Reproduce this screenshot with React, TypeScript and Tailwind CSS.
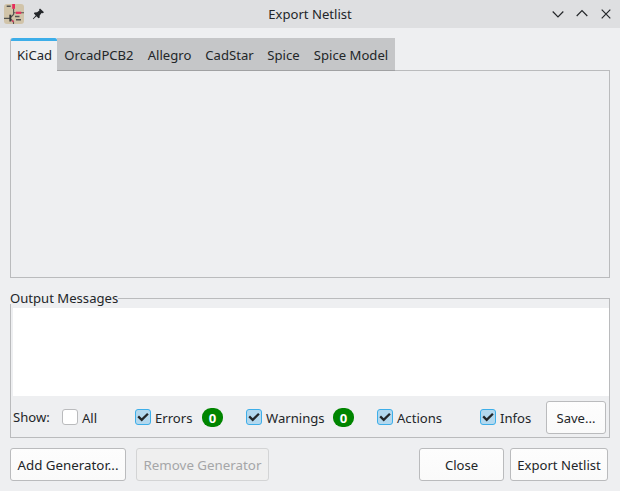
import React from "react";

function Check({ label, checked = false, className }: { label: string; checked?: boolean; className: string }) {
  return (
    <label className={`mb-px flex h-4 shrink-0 items-center gap-1 whitespace-nowrap ${className}`}>
      <span
        className={`flex size-4 shrink-0 items-center justify-center rounded-[3px] border ${
          checked ? "border-[#3daee9] bg-[#b3d8ee]" : "border-[#babbbd] bg-white"
        }`}
      >
        {checked && (
          <svg width="14" height="14" viewBox="0 0 14 14" fill="none" stroke="#232629" strokeWidth="2.3">
            <path d="M2.2 6.4 L5.7 9.8 L11.9 3.7" />
          </svg>
        )}
      </span>
      <span className="pt-[2px]">{label}</span>
    </label>
  );
}

function Badge({ className }: { className: string }) {
  return (
    <span
      className={`flex h-[19px] w-[21px] shrink-0 items-center justify-center rounded-[9px] bg-[#008500] font-bold text-white ${className}`}
    >
      0
    </span>
  );
}

function Button({ label, disabled = false, className }: { label: string; disabled?: boolean; className: string }) {
  return (
    <button
      disabled={disabled}
      className={`flex h-[33px] shrink-0 items-center justify-center whitespace-nowrap rounded-[3px] border pt-px ${
        disabled
          ? "border-[#d3d4d5] bg-[#efefef] text-[#a5a6a8]"
          : "border-[#babbbd] bg-linear-to-b from-[#fdfdfd] to-[#fafafa]"
      } ${className}`}
    >
      {label}
    </button>
  );
}

function TitleBar() {
  return (
    <header className="flex h-7 bg-[#dedfe1]">
      <div className="flex w-[200px] pl-1 pt-1">
        <svg width="20" height="20" viewBox="0 0 20 20">
          <rect width="20" height="20" rx="3" fill="#d1c4a9" />
          <path d="M2.7 2.3h4M11 12.6h4.5M12 15.7h5" stroke="#545350" strokeWidth="1.5" />
          <path d="M9.6 4.5v6L6.5 13.5M0 14.4h6M6.5 15l3 2.5V20M9.6 8.8h2M17 8.8h3" stroke="#545350" strokeWidth="1.1" fill="none" />
          <path d="M6.3 10.7v6.8" stroke="#343536" strokeWidth="1.9" />
          <path d="M9.6 0v4.8" stroke="#e72c5d" strokeWidth="2.8" />
          <path d="M11.8 8.8h5.4" stroke="#e72c5d" strokeWidth="2.2" />
          <path d="M8 16.3l1.6 1.5" stroke="#d84868" strokeWidth="1.6" />
        </svg>
        <svg className="ml-2 mt-1" width="13" height="12" viewBox="0 0 13 12">
          <path d="M8 0.4L12 4.3L10.7 5.2L9.6 5L7.7 7.4L7.6 9.7L6.5 10.2L4.5 8.3L1.3 11.3L0.8 10.8L3.7 7.4L1.9 5.5L2.5 4.4L5.1 4.3L7.4 2.4L7.1 1.4Z" fill="#232629" />
        </svg>
      </div>
      <h1 className="flex flex-1 items-center justify-center">Export Netlist</h1>
      <div className="flex w-[200px] items-center justify-end gap-3 pr-2">
        <svg width="12" height="12" viewBox="0 0 12 12" fill="none" stroke="#232629" strokeWidth="1.2">
          <path d="M0.7 3.5 L6 8.8 L11.3 3.5" />
        </svg>
        <svg width="12" height="12" viewBox="0 0 12 12" fill="none" stroke="#232629" strokeWidth="1.2">
          <path d="M0.7 8 L6 2.7 L11.3 8" />
        </svg>
        <svg width="12" height="12" viewBox="0 0 12 12" fill="none" stroke="#232629" strokeWidth="1.2">
          <path d="M1.7 1.7 L10.3 10.3 M10.3 1.7 L1.7 10.3" />
        </svg>
      </div>
    </header>
  );
}

const tabs = [
  { label: "OrcadPCB2", width: "w-[83px]" },
  { label: "Allegro", width: "w-[58px]" },
  { label: "CadStar", width: "w-[62px]" },
  { label: "Spice", width: "w-[46px]" },
  { label: "Spice Model", width: "w-[89px]" },
];

export default function App() {
  return (
    <div className="flex h-[491px] w-[620px] flex-col overflow-hidden bg-[#eeeff1] font-['Noto_Sans',sans-serif] text-[13.1px] leading-[18px] text-[#232629]">
      <TitleBar />
      <main className="flex flex-col px-[10px] pt-[10px]">
        <nav className="z-10 -mb-px flex h-[33px]">
          <div className="flex w-[47px] flex-col rounded-tl-[3px] border-l border-[#babbbd] bg-[#eeeff1]">
            <div className="h-[3px] rounded-t-[2px] bg-[#3daee9]" />
            <span className="pl-[6px] pt-[5px]">KiCad</span>
          </div>
          {tabs.map((t) => (
            <div
              key={t.label}
              className={`flex items-center justify-center whitespace-nowrap border-b border-[#a0a1a3] bg-[#c5c6c8] pl-px pt-[2px] ${t.width}`}
            >
              {t.label}
            </div>
          ))}
        </nav>
        <section className="h-[208px] border border-[#babbbd]" />

        <section className="mt-[11px] flex h-[149px] flex-col">
          <div className="flex h-[15px]">
            <h2 className="w-[108px] shrink-0 whitespace-nowrap">Output Messages</h2>
            <div className="mt-[9px] flex-1 border-t border-r border-[#babbbd]" />
          </div>
          <div className="flex flex-1 flex-col border border-t-0 border-[#babbbd] pl-[2px] pt-[4px]">
            <div className="h-[88px] bg-white" />
            <div className="flex h-[41px] items-center pb-[3px] pt-[5px]">
              <span className="mb-px w-[49px] shrink-0">Show:</span>
              <Check label="All" className="w-[73px]" />
              <Check label="Errors" checked className="w-[67px]" />
              <Badge className="mr-[23px]" />
              <Check label="Warnings" checked className="w-[87px]" />
              <Badge className="mr-[23px]" />
              <Check label="Actions" checked className="w-[103px]" />
              <Check label="Infos" checked className="w-[66px]" />
              <Button label="Save..." className="w-[60px]" />
            </div>
          </div>
        </section>

        <footer className="mt-[10px] flex pr-[2px]">
          <Button label="Add Generator..." className="w-[116px] text-[13.333px]" />
          <Button label="Remove Generator" disabled className="ml-[10px] w-[133px] text-[13.333px]" />
          <Button label="Close" className="ml-auto w-[85px]" />
          <Button label="Export Netlist" className="ml-[6px] w-[98px]" />
        </footer>
      </main>
    </div>
  );
}
